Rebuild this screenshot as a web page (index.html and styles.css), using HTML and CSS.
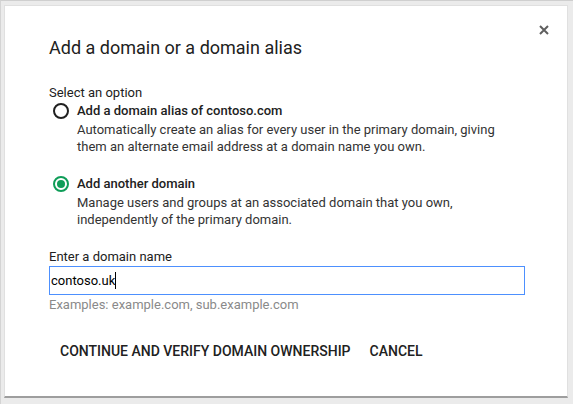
FILE: index.html
```html
<!DOCTYPE html>
<html>
<head>
<meta charset="utf-8">
<link rel="stylesheet" href="styles.css">
</head>
<body>
<div class="frame">
  <div class="dialog">
    <button class="close" aria-label="Close">
      <svg width="10" height="10" viewBox="0 0 10 10"><path d="M1 1L9 9M9 1L1 9" stroke="#5f5f5f" stroke-width="2"/></svg>
    </button>
    <h1 class="title">Add a domain or a domain alias</h1>
    <div class="select-label">Select an option</div>
    <div class="option">
      <span class="radio"></span>
      <div class="option-text">
        <div class="option-title">Add a domain alias of contoso.com</div>
        <div class="option-desc">Automatically create an alias for every user in the primary domain, giving them an alternate email address at a domain name you own.</div>
      </div>
    </div>
    <div class="option option-second">
      <span class="radio checked"></span>
      <div class="option-text">
        <div class="option-title">Add another domain</div>
        <div class="option-desc">Manage users and groups at an associated domain that you own, independently of the primary domain.</div>
      </div>
    </div>
    <div class="field-label">Enter a domain name</div>
    <div class="input"><span>contoso.uk</span><span class="caret"></span></div>
    <div class="hint">Examples: example.com, sub.example.com</div>
    <div class="actions">
      <button class="btn">CONTINUE AND VERIFY DOMAIN OWNERSHIP</button>
      <button class="btn">CANCEL</button>
    </div>
  </div>
</div>
</body>
</html>
```
FILE: styles.css
```css
html, body {
  margin: 0;
  padding: 0;
  height: 100%;
}
body {
  font-family: Roboto, "Liberation Sans", sans-serif;
  background: #ebebeb;
  color: #212121;
}
.frame {
  box-sizing: border-box;
  width: 573px;
  height: 404px;
  border-top: 1px solid #cfcfcf;
  border-left: 1px solid #d4d4d4;
  padding: 4px 5px 6px 3px;
}
.dialog {
  position: relative;
  box-sizing: border-box;
  width: 564px;
  height: 393px;
  background: #fff;
  border: 1px solid #e0e0e0;
  border-bottom: 2px solid #9e9e9e;
  padding: 31px 0 0 44px;
}
.close {
  position: absolute;
  top: 19px;
  right: 18px;
  width: 10px;
  height: 10px;
  padding: 0;
  border: 0;
  background: none;
  display: flex;
}
.title {
  margin: 0;
  font-size: 18px;
  font-weight: 400;
  line-height: 22px;
  color: #212121;
}
.select-label {
  margin-top: 25px;
  font-size: 13px;
  line-height: 17px;
}
.option {
  display: flex;
  gap: 8px;
  margin-top: 1px;
  align-items: flex-start;
}
.option-second {
  margin-top: 20px;
}
.radio {
  box-sizing: border-box;
  width: 16px;
  height: 16px;
  margin: 1px 0 0 4px;
  border: 2px solid #202020;
  border-radius: 50%;
  flex: none;
  display: flex;
  align-items: center;
  justify-content: center;
}
.radio.checked {
  border-color: #0f9d58;
}
.radio.checked::after {
  content: "";
  width: 8px;
  height: 8px;
  border-radius: 50%;
  background: #0f9d58;
}
.option-text {
  font-size: 13px;
  line-height: 17px;
  width: 440px;
}
.option-title {
  font-weight: 500;
  color: #212121;
  margin-bottom: 2px;
}
.option-desc {
  color: #333;
}
.field-label {
  margin-top: 20px;
  font-size: 13px;
  line-height: 17px;
}
.input {
  box-sizing: border-box;
  margin-top: 1px;
  width: 476px;
  height: 29px;
  border: 1px solid #4d90fe;
  padding: 0 0 0 1px;
  font-size: 13px;
  display: flex;
  align-items: center;
  color: #000;
}
.caret {
  width: 1px;
  height: 17px;
  background: #000;
}
.hint {
  margin-top: 1px;
  font-size: 13px;
  line-height: 17px;
  color: #8a8a8a;
}
.actions {
  display: flex;
  gap: 19px;
  margin-top: 30px;
  margin-left: 11px;
}
.btn {
  font-family: Roboto, "Liberation Sans", sans-serif;
  font-size: 14px;
  font-weight: 500;
  color: #212121;
  background: none;
  border: 0;
  padding: 0;
  line-height: 17px;
}
```
